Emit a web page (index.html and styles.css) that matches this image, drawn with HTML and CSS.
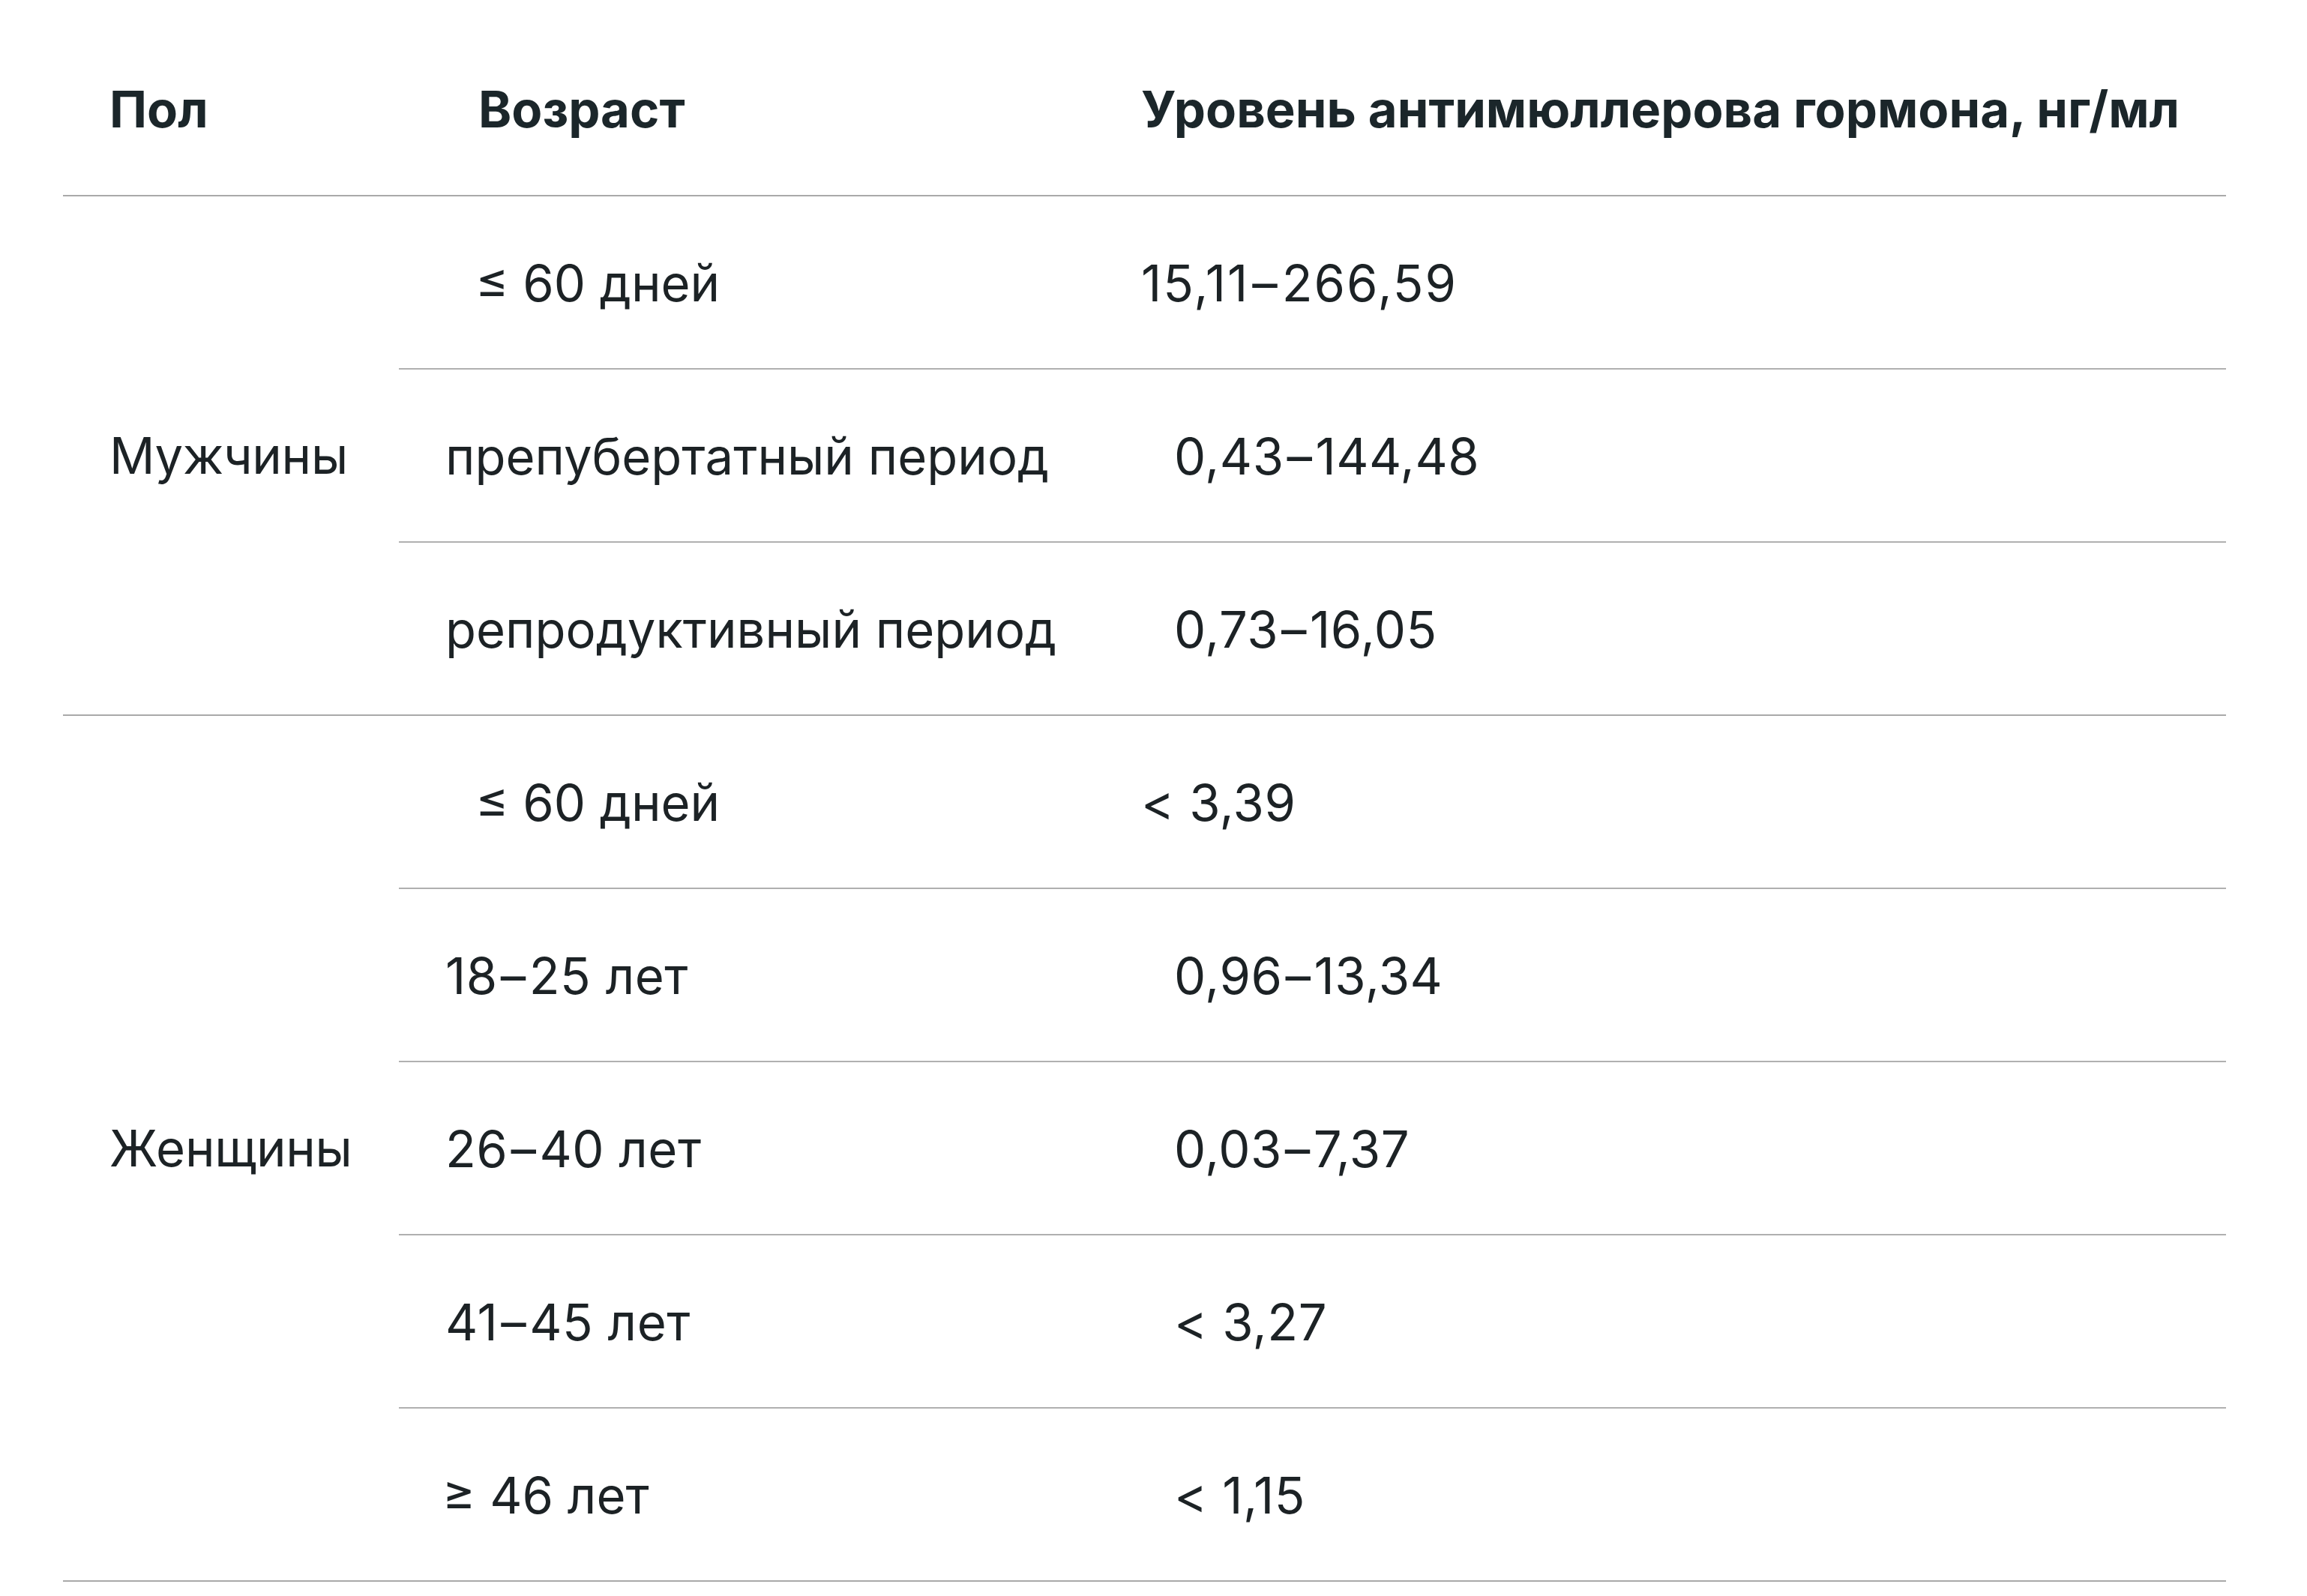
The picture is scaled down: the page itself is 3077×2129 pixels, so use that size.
FILE: index.html
```html
<!DOCTYPE html>
<html lang="ru">
<head>
<meta charset="utf-8">
<title>Уровень антимюллерова гормона</title>
<link rel="stylesheet" href="styles.css">
</head>
<body>
<div class="table">
  <div class="thead">
    <div class="cell pad-s">Пол</div>
    <div class="cell pad-l">Возраст</div>
    <div class="cell pad-s">Уровень антимюллерова гормона, нг/мл</div>
  </div>

  <div class="group">
    <div class="sex pad-s">Мужчины</div>
    <div class="rows">
      <div class="row">
        <div class="cell sym pad-l">≤ 60 дней</div>
        <div class="cell num wide pad-s">15,11<span class="dash">–</span>266,59</div>
      </div>
      <div class="row">
        <div class="cell pad-s">препубертатный период</div>
        <div class="cell num pad-l">0,43<span class="dash">–</span>144,48</div>
      </div>
      <div class="row">
        <div class="cell pad-s">репродуктивный период</div>
        <div class="cell num pad-l">0,73<span class="dash">–</span>16,05</div>
      </div>
    </div>
  </div>

  <div class="group">
    <div class="sex pad-s">Женщины</div>
    <div class="rows">
      <div class="row">
        <div class="cell sym pad-l">≤ 60 дней</div>
        <div class="cell num pad-s">&lt; 3,39</div>
      </div>
      <div class="row">
        <div class="cell num pad-s">18<span class="dash">–</span>25 лет</div>
        <div class="cell num pad-l">0,96<span class="dash">–</span>13,34</div>
      </div>
      <div class="row">
        <div class="cell num pad-s">26<span class="dash">–</span>40 лет</div>
        <div class="cell num pad-l">0,03<span class="dash">–</span>7,37</div>
      </div>
      <div class="row">
        <div class="cell num pad-s">41<span class="dash">–</span>45 лет</div>
        <div class="cell num pad-l">&lt; 3,27</div>
      </div>
      <div class="row">
        <div class="cell sym pad-s">≥ 46 лет</div>
        <div class="cell num pad-l">&lt; 1,15</div>
      </div>
    </div>
  </div>
</div>
</body>
</html>
```

FILE: styles.css
```css
html, body {
  margin: 0;
  padding: 0;
  background: #ffffff;
}

body {
  font-family: Inter, "Noto Sans", "Liberation Sans", sans-serif;
  font-size: 67px;
  line-height: 80px;
  color: #1c2225;
}

.table {
  margin-left: 84px;
  width: 2885px;
}

.thead {
  display: grid;
  grid-template-columns: 448px 928px 1fr;
  padding-top: 106px;
  padding-bottom: 74px;
  border-bottom: 2px solid #a9a9a9;
  font-weight: 700;
  color: #1b262a;
}

.group {
  display: grid;
  grid-template-columns: 448px 1fr;
  border-bottom: 2px solid #a9a9a9;
}

.sex {
  align-self: center;
  letter-spacing: -0.3px;
}

.rows {
  display: flex;
  flex-direction: column;
}

.row {
  display: grid;
  grid-template-columns: 928px 1fr;
  align-items: center;
  box-sizing: border-box;
  height: 231px;
  padding-top: 2px;
  border-bottom: 2px solid #b0b0b0;
}

.row:last-child {
  border-bottom: none;
  height: 229px;
}

.cell {
  white-space: nowrap;
}

.num {
  letter-spacing: 0.5px;
}

.wide {
  letter-spacing: 2px;
}

.dash {
  margin: 0 4px;
}

.pad-s {
  padding-left: 62px;
}

.pad-l {
  padding-left: 106px;
}

.sym {
  margin-left: -4px;
}
```
